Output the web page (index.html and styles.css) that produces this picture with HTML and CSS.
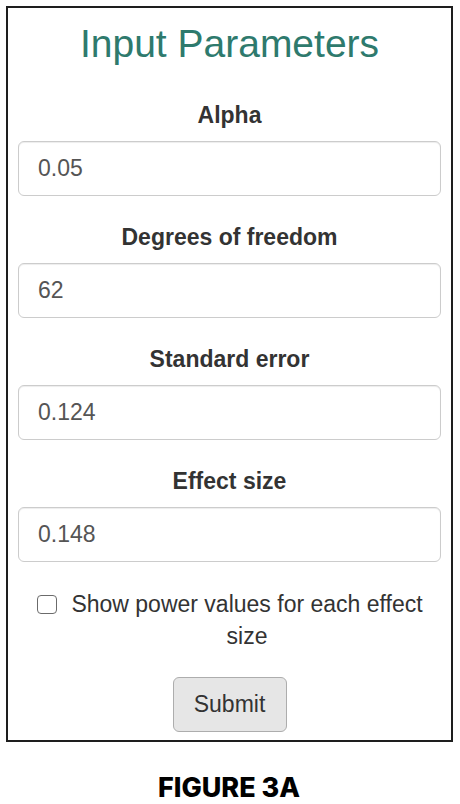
FILE: index.html
```html
<!DOCTYPE html>
<html>
<head>
<meta charset="utf-8">
<link rel="stylesheet" href="styles.css">
</head>
<body>
<div class="panel">
  <h3 class="title">Input Parameters</h3>
  <div class="group">
    <label class="lbl">Alpha</label>
    <input class="field" type="text" value="0.05">
  </div>
  <div class="group">
    <label class="lbl">Degrees of freedom</label>
    <input class="field" type="text" value="62">
  </div>
  <div class="group">
    <label class="lbl">Standard error</label>
    <input class="field" type="text" value="0.124">
  </div>
  <div class="group">
    <label class="lbl">Effect size</label>
    <input class="field" type="text" value="0.148">
  </div>
  <label class="check">
    <input class="box" type="checkbox">
    <span class="check-text">Show power values for each effect size</span>
  </label>
  <div class="actions">
    <button class="btn" type="button">Submit</button>
  </div>
</div>
<div class="caption">FIGURE 3A</div>
</body>
</html>
```
FILE: styles.css
```css
html, body {
  margin: 0;
  padding: 0;
  background: #ffffff;
}
body {
  font-family: "Liberation Sans", Arial, sans-serif;
  font-size: 23px;
  line-height: 32px;
  color: #333333;
  padding: 6px 7px 0 6px;
}
.panel {
  border: 2px solid #1e1e1e;
  padding: 14px 10px 8px 10px;
  display: flex;
  flex-direction: column;
  height: 736px;
  box-sizing: border-box;
}
.title {
  margin: 0 0 34px 0;
  font-weight: 400;
  font-size: 39px;
  line-height: 43px;
  color: #2e7a6d;
  text-align: center;
}
.group {
  display: flex;
  flex-direction: column;
  margin-bottom: 25px;
}
.lbl {
  font-weight: 700;
  text-align: center;
  margin-bottom: 10px;
  line-height: 32px;
}
.field {
  box-sizing: border-box;
  height: 55px;
  width: 100%;
  border: 1.6px solid #cccccc;
  border-radius: 6px;
  padding: 0 19px;
  font-family: "Liberation Sans", Arial, sans-serif;
  font-size: 23px;
  color: #555555;
  background: #fff;
  box-shadow: inset 0 1px 1px rgba(0,0,0,0.075);
  outline: none;
}
.check {
  display: flex;
  justify-content: center;
  align-items: flex-start;
  padding: 0 17px 0 19px;
  margin-top: 1px;
}
.box {
  appearance: none;
  -webkit-appearance: none;
  width: 20px;
  height: 19px;
  margin: 7px 13px 0 0;
  border: 1.6px solid #6b6b6b;
  border-radius: 4px;
  background: #fff;
  flex: 0 0 auto;
  box-sizing: border-box;
}
.check-text {
  flex: 1 1 auto;
  text-align: center;
  line-height: 32px;
}
.actions {
  display: flex;
  justify-content: center;
  margin-top: 25px;
}
.btn {
  box-sizing: border-box;
  width: 114px;
  height: 55px;
  background: #e6e6e6;
  border: 1.6px solid #adadad;
  border-radius: 6px;
  font-family: "Liberation Sans", Arial, sans-serif;
  font-size: 23px;
  color: #333333;
  padding: 0;
}
.caption {
  margin-top: 30px;
  text-align: center;
  font-family: Inter, "Liberation Sans", sans-serif;
  font-weight: 800;
  font-size: 27px;
  line-height: 32px;
  color: #000;
  letter-spacing: 0;
  padding-right: 1px;
}
```
